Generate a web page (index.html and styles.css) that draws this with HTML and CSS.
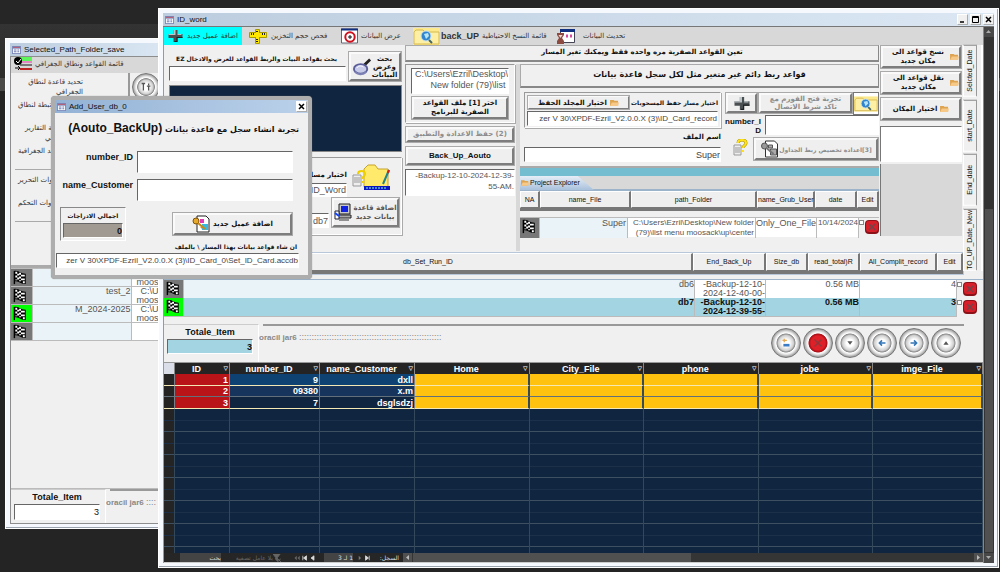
FILE: index.html
```html
<!DOCTYPE html>
<html lang="ar">
<head>
<meta charset="utf-8">
<title>ID_word</title>
<link rel="stylesheet" href="styles.css">
</head>
<body>
<svg class="defs" aria-hidden="true">
  <symbol id="i-form" viewBox="0 0 10 9"><path d="M0 0h10v9H0z" fill="#7a86b8"/><path d="M1 1h8v1H1z" fill="#c05a6a"/><path d="M1 3h8v5H1z" fill="#fff"/><path d="M2 4h3v1H2zM2 6h3v1H2zM6 4h2v1H6zM6 6h2v1H6z" fill="#6a78b0"/></symbol>
  <symbol id="i-plus" viewBox="0 0 16 14"><path d="M6 1h4v4h5v4h-5v4H6V9H1V5h5z" fill="#4a4f52"/><path d="M6 1h2v5H1V5h5zM10 5h4v1h-4z" fill="#bcc4c8"/><path d="M10 9v4H7v-1h2V8h6v1z" fill="#1d2022"/></symbol>
  <symbol id="i-ruler" viewBox="0 0 20 17"><path d="M1.500 4.500h17v5h-17z" fill="#ffe700" stroke="#a89b00"/><path d="M7.500 1.500h4v14h-4z" fill="#ffe700" stroke="#a89b00"/><path d="M2 5h16v4H2z" fill="#ffe700"/><path d="M3.500 5v2M5.500 5v2M14.500 5v2M16.500 5v2M8 11.500h2M8 13.500h2M8 3.500h2" stroke="#222"/></symbol>
  <symbol id="i-target" viewBox="0 0 17 15"><path d="M.5.5h16v14H.5z" fill="#fff" stroke="#667"/><path d="M0 0h17v2H0z" fill="#123080"/><circle cx="9" cy="8.500" r="4.700" fill="#fff" stroke="#d0101c" stroke-width="2"/><path d="M7 8.500h4M9 6.500v4" stroke="#111"/></symbol>
  <symbol id="i-globe" viewBox="0 0 27 17"><path d="M0 0h27v17H0z" fill="#fbe98c"/><path d="M1 16V4l2-2h7l2 2h14v12z" fill="#fdf0a4" stroke="#d6b851"/><circle cx="13" cy="8" r="5" fill="#2f86cf" stroke="#c9e2f5"/><path d="M11 6l4-1 1 3-3 3z" fill="#b8e4f4"/><path d="M16 12l3 3" stroke="#466" stroke-width="2"/></symbol>
  <symbol id="i-clock" viewBox="0 0 18 15"><path d="M3.500 1.500h14v12h-14z" fill="#fff" stroke="#445"/><path d="M3 0h15v3H3z" fill="#123080"/><path d="M9 7h2M13 7h2" stroke="#d8489c" stroke-width="3"/><path d="M0 4h7v2L5 9l2 3v3H0v-3l2-3-2-3z" fill="#8d4a40"/><path d="M1.500 6h4L3.500 9z" fill="#f0d6cc"/></symbol>
  <symbol id="i-flag" viewBox="0 0 20 18"><path d="M3 2v14" stroke="#000" stroke-width="1.500"/><path d="M3 2c5-1 6 3 12 3v11c-6 0-7-4-12-3z" fill="#000"/><path d="M4 3h2v2H4zM8 4h2v2H8zM12 6h2v2h-2zM6 5h2v2H6zM10 6h2v2h-2zM4 7h2v2H4zM8 8h2v2H8zM12 10h2v2h-2zM6 9h2v2H6zM10 10h2v2h-2zM4 11h2v1H4zM8 12h2v1H8zM12 13h2v2h-2z" fill="#fff"/></symbol>
  <symbol id="i-ask" viewBox="0 0 14 17"><path d="M1 6h7v10H1z" fill="#eee" stroke="#999"/><path d="M2 9h5M2 11h5M2 13h5" stroke="#999"/><path d="M5 4c0-4 8-4 8 0 0 3-3 2-3 5" fill="none" stroke="#ad9500" stroke-width="3"/><path d="M5 4c0-4 8-4 8 0 0 3-3 2-3 5M10 11v2" fill="none" stroke="#ffe21a" stroke-width="2"/></symbol>
  <symbol id="i-lens" viewBox="0 0 20 20"><path d="M12 8l6-6" stroke="#222" stroke-width="3"/><ellipse cx="8" cy="12" rx="7" ry="5" fill="#c9cce8" stroke="#5a5f9a" stroke-width="2"/><path d="M4 11c2-3 6-2 7-1" stroke="#fff" fill="none"/><path d="M2 15c3 4 9 3 12 0" stroke="#7d82b5" fill="none" stroke-width="2"/></symbol>
  <symbol id="i-pc" viewBox="0 0 18 19"><path d="M5 1h11v10H5z" fill="#c8c8c8" stroke="#222"/><path d="M7 3h7v6H7z" fill="#1022e0"/><path d="M4 12h13v3H4z" fill="#aaa" stroke="#222"/><path d="M1 8h4v8H1z" fill="#fff" stroke="#223"/><path d="M1 10l4 3" stroke="#14f" stroke-width="2"/><path d="M5 17h10" stroke="#333"/></symbol>
  <symbol id="i-edit" viewBox="0 0 38 28"><path d="M12 24V6l4-4h7l3 4h10v18z" fill="#ffea6c" stroke="#c8a32b"/><path d="M12 23h26v4H12z" fill="#0a17c0"/><path d="M14 25h20" stroke="#8fd" stroke-dasharray="2 1"/><path d="M37 7l-6 14" stroke="#21858a" stroke-width="2"/><path d="M37 7l-1 3" stroke="#c22" stroke-width="2"/><path d="M1 12h8v11H1z" fill="#eee" stroke="#999"/><path d="M2 15h6M2 17h6M2 19h6" stroke="#999"/><path d="M6 11c0-4 7-4 7 0 0 3-3 2-3 5M10 18v2" fill="none" stroke="#f0cf00" stroke-width="2"/></symbol>
  <symbol id="i-key" viewBox="0 0 18 18"><path d="M5 1h9l3 3v13H5z" fill="#fff" stroke="#222"/><path d="M8 4h4v4H8z" fill="#e23bb4"/><path d="M10 9h6v6h-6z" fill="#37b9df"/><circle cx="4" cy="6" r="3" fill="#e6a92c" stroke="#7e5200"/><path d="M6 8l7 6M9 13l2-2" stroke="#c98a1a" stroke-width="2"/></symbol>
  <symbol id="i-keyg" viewBox="0 0 18 18"><path d="M5 1h9l3 3v13H5z" fill="#fff" stroke="#333"/><path d="M8 5h4v3H8zM10 9h6v6h-6z" fill="#aaa" stroke="#555"/><circle cx="4" cy="6" r="3" fill="#999" stroke="#555"/><path d="M6 8l7 6" stroke="#777" stroke-width="2"/></symbol>
  <symbol id="i-dir" viewBox="0 0 10 9"><path d="M0 8V1h4l1 1h4v6z" fill="#dfa450"/><path d="M0 8l2-4h8L9 8z" fill="#f6c988"/></symbol>
  <symbol id="i-list" viewBox="0 0 18 14"><path d="M6 1h12M6 3h12" stroke="#3f3" stroke-width="1.500"/><path d="M6 5h12" stroke="#e3a"/><path d="M6 8h12" stroke="#777" stroke-width="2"/><path d="M6 12h12" stroke="#b22" stroke-width="2"/><circle cx="4" cy="4" r="4"/><path d="M2 4l2 2 3-4" stroke="#fff" fill="none"/><path d="M1 11h5M4 9l2 2-2 2" stroke="#000" fill="none"/></symbol>
  <symbol id="i-del" viewBox="0 0 14 14"><rect width="14" height="14" rx="4" fill="#8a1218"/><rect x="1" y="1" width="12" height="11" rx="3" fill="#d81e28"/><path d="M4 4l6 6M10 4l-6 6" stroke="#70454a" stroke-width="1.500"/></symbol>
</svg>
<main class="desktop">

<section class="win back">
  <header class="title"><svg class="fi"><use href="#i-form"/></svg>Selected_Path_Folder_save</header>
  <div class="inner">
    <div class="bar small"><svg class="lst"><use href="#i-list"/></svg><span dir="rtl">قائمة القواعد ونطاق الجغرافي</span></div>
    <div class="side">
      <div class="links">
        <p class="two">تحديد قاعدة لنطاق<br>الجغرافي</p>
        <p class="a">القواعد المرتبطة لنطاق</p>
        <p class="b">قائمة التقارير<br><span>الجغرافي</span></p>
        <p class="a">القواعد الجغرافية</p>
        <hr>
        <p class="a">ادوات التحرير</p>
        <p class="a">ادوات التحكم</p>
        <hr>
      </div>
      <button class="round" aria-label="tools"><svg viewBox="0 0 16 16"><path d="M5 4v8M11 7v5M3 4h4M11 4v2M9 7h4" stroke="#555" stroke-width="1.500"/></svg></button>
    </div>
    <table class="paths">
      <tr><td class="fl"><svg><use href="#i-flag"/></svg><td><div>new_test</div><td><div>C:\U<br>moos</div></tr>
      <tr><td class="fl"><svg><use href="#i-flag"/></svg><td><div>test_2</div><td><div>C:\U<br>moos</div></tr>
      <tr><td class="fl on"><svg><use href="#i-flag"/></svg><td><div>M_2024-2025</div><td><div>C:\U<br>moos</div></tr>
      <tr><td class="fl"><svg><use href="#i-flag"/></svg><td><div></div><td><div></div></tr>
    </table>
    <div class="foot">
      <div class="total"><label for="t1">Totale_Item</label><input id="t1" value="3"></div>
      <div class="status"><i></i>oracil jar6 <span>::::</span></div>
    </div>
  </div>
</section>

<section class="win front">
  <header class="title"><svg class="fi"><use href="#i-form"/></svg><span>ID_word</span>
    <div class="wb"><button aria-label="minimize"><svg viewBox="0 0 9 9"><path d="M2 7h4" stroke="#000" stroke-width="1.500"/></svg></button><button aria-label="maximize"><svg viewBox="0 0 9 9"><path d="M1.500 1.500h6v6h-6zM1 2.500h7" stroke="#000" fill="none"/></svg></button><button aria-label="close"><svg viewBox="0 0 9 9"><path d="M2 2l5 5M7 2L2 7" stroke="#000" stroke-width="1.500"/></svg></button></div>
  </header>
  <div class="frame">
  <div class="body">
    <nav class="bar">
      <a href="#" class="n1"><svg><use href="#i-plus"/></svg><span dir="rtl">اضافة عميل جديد</span></a>
      <a href="#" class="n2"><svg><use href="#i-ruler"/></svg><span dir="rtl">فحص حجم التخزين</span></a>
      <a href="#" class="n3"><svg><use href="#i-target"/></svg><span dir="rtl">عرض البيانات</span></a>
      <a href="#" class="n4"><svg><use href="#i-globe"/></svg><b>back_UP</b><span dir="rtl">قائمة النسخ الاحتياطية</span></a>
      <a href="#" class="n5"><svg><use href="#i-clock"/></svg><span dir="rtl">تحديث البيانات</span></a>
    </nav>
    <div class="top">
      <div class="find">
        <div class="findrow">
          <div class="findbox"><label for="q" dir="rtl">بحث بقواعد البيات والربط القواعد للعرض والادخال EZ</label><input id="q"></div>
          <button class="bv look"><svg><use href="#i-lens"/></svg><span dir="rtl">بحث<br>وعرض<br>البيانات</span></button>
        </div>
        <div class="navy"></div>
        <div class="group pick">
          <div class="line"><div class="fld"><label for="p1" dir="rtl">اختيار مسار</label><input id="p1" value="ID_Word"></div><svg class="ed"><use href="#i-edit"/></svg></div>
          <div class="line"><input class="db" aria-label="database" value="db7"><button class="bv add"><svg><use href="#i-pc"/></svg><span dir="rtl">اضافة قاعدة بيانات جديد</span></button></div>
        </div>
      </div>
      <h2 class="strip one" dir="rtl">تعين القواعد الصفرية مره واحده فقط ويمكنك تغير المسار</h2>
      <div class="backup">
        <div class="group g1"><textarea aria-label="folder">C:\Users\Ezril\Desktop\
New folder (79)\list </textarea><button class="bv" dir="rtl">اختر [1] ملف القواعد الصفرية للبرنامج</button></div>
        <button class="bv dim" dir="rtl">(2) حفظ الاعدادة والتطبيق</button>
        <button class="bv auto">Back_Up_Aouto</button>
        <textarea class="bk" aria-label="backup name">-Backup-12-10-2024-12-39-
55-AM.</textarea>
      </div>
      <div class="link">
        <h2 class="strip two" dir="rtl">قواعد ربط دائم غير متغير مثل لكل سجل قاعدة بيانات</h2>
        <div class="panel">
          <div class="pl">
            <div class="group sv"><div class="line"><button class="bv sel"><span dir="rtl">اختيار المجلد الحفظ</span><svg><use href="#i-dir"/></svg></button><label for="p2" dir="rtl">اختيار مسار حفظ المسحوبات</label></div><input id="p2" class="long" value="zer V 30\XPDF-Ezril_V2.0.0.X (3)\ID_Card_record"></div>
            <label for="fn" class="fn" dir="rtl">اسم الملف</label><input id="fn" value="Super">
          </div>
          <div class="pr">
            <div class="line"><button class="bv pb" aria-label="add"><svg><use href="#i-plus"/></svg></button><button class="bv dim tst" dir="rtl">تجربة فتح الفورم مع تاكد شرط الاتصال</button><button class="gl" aria-label="search"><svg><use href="#i-globe"/></svg></button></div>
            <div class="line num"><label for="ni">number_I<br>D</label><input id="ni"></div>
            <div class="line"><svg class="ask"><use href="#i-ask"/></svg><button class="bv dim cst"><svg><use href="#i-keyg"/></svg><span dir="rtl">[3]اعدادة تخصيص ربط الجداول</span></button></div>
          </div>
        </div>
        <div class="blue"></div>
        <div class="ptab"><span><svg><use href="#i-dir"/></svg>Project Explorer</span></div>
        <div class="hd h1"><button>NA</button><button>name_File</button><button>path_Folder</button><button>name_Grub_User</button><button>date</button><button>Edit</button></div>
        <div class="prow"><span class="fl"><svg><use href="#i-flag"/></svg></span><span class="pale">Super</span><span class="long">C:\Users\Ezril\Desktop\New folder<br>(79)\list menu moosack\up\center</span><span>Only_One_File</span><span class="dt">10/14/2024</span><span class="ck"><input type="checkbox" aria-label="select"><button class="del" aria-label="delete"><svg><use href="#i-del"/></svg></button></span></div>
      </div>
      <div class="move">
        <button class="bv"><span dir="rtl">نسخ قواعد الى<br>مكان جديد</span><svg><use href="#i-dir"/></svg></button>
        <button class="bv"><span dir="rtl">نقل قواعد الى<br>مكان جديد</span><svg><use href="#i-dir"/></svg></button>
        <button class="bv here"><span dir="rtl">اختيار المكان</span><svg><use href="#i-dir"/></svg></button>
        <div class="wh"></div><div class="gr"></div>
      </div>
      <div class="tabs"><button>Selcted_Date</button><button>start_Date</button><button>End_date</button><button>TO_UP_Date_New</button></div>
    </div>
    <div class="hd h2"><button>db_Set_Run_ID</button><button>End_Back_Up</button><button>Size_db</button><button>read_total)R</button><button>All_Complit_record</button><button>Edit</button></div>
    <div class="rows">
      <div class="r"><span class="fl"><svg><use href="#i-flag"/></svg></span><span class="pale">db6</span><span>-Backup-12-10-<br>2024-12-40-00-</span><span>0.56 MB</span><span>4</span><span class="ck"><input type="checkbox" aria-label="select db6"><button class="del" aria-label="delete"><svg><use href="#i-del"/></svg></button></span></div>
      <div class="r cur"><span class="fl on"><svg><use href="#i-flag"/></svg></span><span>db7</span><span>-Backup-12-10-<br>2024-12-39-55-</span><span>0.56 MB</span><span>3</span><span class="ck"><input type="checkbox" aria-label="select db7"><button class="del" aria-label="delete"><svg><use href="#i-del"/></svg></button></span></div>
    </div>
    <div class="foot">
      <div class="total"><label for="t2">Totale_Item</label><input id="t2" value="3"></div>
      <div class="status"><i></i>oracil jar6 <span>:::::::::::::::::::::::::::::::::::::::::::::::::::::::::</span>
        <div class="rounds">
          <button class="round" aria-label="new"><svg viewBox="0 0 16 16"><path d="M5 9h7v3H5z" fill="#3b7cc4"/><path d="M4 5h5M6 3v4" stroke="#e8a850" stroke-width="1.500"/></svg></button>
          <button class="round red" aria-label="delete"><svg viewBox="0 0 16 16"><path d="M4 4l8 8M12 4l-8 8" stroke="#8a3a3a" stroke-width="1.500"/></svg></button>
          <button class="round" aria-label="last"><svg viewBox="0 0 16 16"><path d="M5 6h6l-3 4z" fill="#555"/></svg></button>
          <button class="round" aria-label="previous"><svg viewBox="0 0 16 16"><path d="M12 8H5M8 5L5 8l3 3" stroke="#3477b8" stroke-width="1.800" fill="none"/></svg></button>
          <button class="round" aria-label="next"><svg viewBox="0 0 16 16"><path d="M4 8h7M8 5l3 3-3 3" stroke="#3477b8" stroke-width="1.800" fill="none"/></svg></button>
          <button class="round" aria-label="first"><svg viewBox="0 0 16 16"><path d="M5 10h6L8 6z" fill="#555"/></svg></button>
        </div>
      </div>
    </div>
    <div class="sheet">
      <table class="grid">
        <colgroup><col class="c0"><col class="c1"><col class="c2"><col class="c3"><col><col><col><col><col class="c8"></colgroup>
        <thead><tr><th class="cn"></th><th>ID</th><th>number_ID</th><th>name_Customer</th><th>Home</th><th>City_File</th><th>phone</th><th>jobe</th><th>imge_File</th></tr></thead>
        <tbody>
        <tr class="s1"><td><td>1<td>9<td>dxll<td><td><td><td><td></tr>
        <tr class="s2"><td><td>2<td>09380<td>x.m<td><td><td><td><td></tr>
        <tr class="s3"><td><td>3<td>7<td>dsglsdzj<td><td><td><td><td></tr>
        <tr class="rest"><td><td><td><td><td><td><td><td><td></tr>
        </tbody>
      </table>
    </div>
    <div class="recnav"><span class="srch">بحث</span><span class="nof" dir="rtl">بلا عامل تصفية</span><svg class="fun" viewBox="0 0 9 9"><path d="M0 0h8L5 4v4L3 6V4zM5 5l4 4M9 5L5 9" fill="#666" stroke="#666"/></svg><svg class="ar" viewBox="0 0 30 8"><path d="M4 1v6L1 4zM8 1v6L5 4z" fill="#666"/><path d="M12 1v6M17 1v6l-4-3zM27 1v6l-4-3z" fill="#ddd" stroke="#ddd"/></svg><span class="pos" dir="rtl">1 لـ 3</span><svg class="ar2" viewBox="0 0 16 8"><path d="M1 1v6l3-3z" fill="#777"/><path d="M10 1v6l4-3zM15 1v6" fill="#ddd" stroke="#ddd"/></svg><span class="rec" dir="rtl">السجل:</span><div class="hs"><i><svg viewBox="0 0 9 9"><path d="M6 2v5L3 4.500z" fill="#bbb"/></svg></i><b></b><i><svg viewBox="0 0 9 9"><path d="M3 2v5l3-2.500z" fill="#bbb"/></svg></i></div></div>
  </div>
  <div class="vs"><i><svg viewBox="0 0 9 9"><path d="M2 6h5L4.500 3z" fill="#aaa"/></svg></i><b></b><i><svg viewBox="0 0 9 9"><path d="M2 3h5L4.500 6z" fill="#aaa"/></svg></i></div>
  </div>
</section>

<section class="dlg">
  <header class="title"><svg class="fi"><use href="#i-form"/></svg><span>Add_User_db_0</span><button class="x" aria-label="close"><svg viewBox="0 0 9 9"><path d="M2 2l5 5M7 2L2 7" stroke="#000" stroke-width="1.500"/></svg></button></header>
  <div class="dbody">
    <h1 dir="rtl">تجربة انشاء سجل مع قاعدة بيانات <bdi>(Aouto_BackUp)</bdi></h1>
    <div class="row"><label for="d1">number_ID</label><input id="d1"></div>
    <div class="row"><label for="d2">name_Customer</label><input id="d2"></div>
    <div class="act">
      <div class="sum"><label for="d3" dir="rtl">اجمالي الادراجات</label><input id="d3" value="0"></div>
      <button class="bv"><svg><use href="#i-key"/></svg><span dir="rtl">اضافة عميل جديد</span></button>
    </div>
    <label class="pth" for="d4" dir="rtl">ان شاء قواعد بيانات بهذا المسار \ بالملف</label>
    <input id="d4" class="pin long" value="zer V 30\XPDF-Ezril_V2.0.0.X (3)\ID_Card_0\Set_ID_Card.accdb">
  </div>
</section>
</main>
</body>
</html>
```
FILE: styles.css
```css
* { box-sizing: border-box; }
body { margin: 0; font: 9px/11px "Liberation Sans", "DejaVu Sans", sans-serif; color: #111; }
h1, h2, p, hr { margin: 0; }
button, input, textarea { font: inherit; color: inherit; padding: 0; margin: 0; border-radius: 0; min-width: 0; }
textarea { resize: none; overflow: hidden; display: block; }
svg { display: block; flex: none; }
a { color: inherit; text-decoration: none; }
.defs { position: absolute; width: 0; height: 0; }
.desktop { position: relative; height: 100vh; min-height: 572px; overflow: hidden; background: linear-gradient(#262626 24px, #333 24px, #2c2c2c 78px, #4a4a4a 78px, #4a4a4a 91px, #242424 91px); }
.win { position: absolute; background: #f5f8fc; border: 1px solid #fff; box-shadow: inset -1px -1px #9aa3ad; padding: 4px; display: flex; flex-direction: column; }
.back { left: 5px; top: 38px; width: 166px; height: 491px; }
.front { left: 158px; right: 1px; top: 8px; bottom: 4px; }
.title { display: flex; align-items: center; gap: 3px; flex: none; height: 13px; padding-left: 2px; font: 8px/12px "Liberation Sans", sans-serif; color: #111; background: linear-gradient(90deg, #bccddf, #dbe7f3); white-space: nowrap; }
.fi { width: 9px; height: 8px; }
.wb { display: flex; gap: 2px; margin-left: auto; }
.wb button, .x { width: 11px; height: 11px; border: 1px outset #fff; background: #f0f0f0; }
.wb svg, .x svg { width: 9px; height: 9px; }

input, textarea { background: #fff; border: 1px solid; border-color: #666 #fff #fff #666; text-align: right; }
.group { border: 1px solid; border-color: #999 #fff #fff #999; box-shadow: 1px 1px #aaa; }
.line { display: flex; }
.bv { display: flex; align-items: center; justify-content: center; gap: 3px; border: 3px solid; border-color: #fafafa #7d7d7d #7d7d7d #fafafa; outline: 1px solid #aaa; outline-offset: -1px; background: #efefef; font: bold 7px/9px "DejaVu Sans", sans-serif; text-align: center; }
.dim { color: #8c8c8c; }
.bar { display: flex; height: 18px; background: #d8d8d8; font: 7px/18px "DejaVu Sans", sans-serif; color: #333; white-space: nowrap; }
.bar a { display: flex; align-items: center; gap: 3px; }

.inner { flex: 1; border: 1px solid #8d8d8d; background: #f0f0f0; display: flex; flex-direction: column; overflow: hidden; }
.small { height: 16px; line-height: 15px; font-size: 7px; padding-left: 3px; gap: 3px; }
.lst { width: 18px; height: 14px; }
.side { display: flex; height: 195px; border-bottom: 3px solid #aaa; }
.links { width: 119px; border-right: 2px solid #999; font: 7px/10px "DejaVu Sans", sans-serif; color: #333; white-space: nowrap; padding-top: 4px; }
.links .two { margin-bottom: 3px; width: 72px; text-align: right; }
.links .a { padding-left: 7px; margin-bottom: 13px; }
.links .b { padding-left: 14px; margin-bottom: 3px; }
.links .b span { padding-left: 20px; }
.links hr { border: 0; border-top: 1px solid #aaa; margin: 0 4px 5px; }
.round { width: 30px; height: 30px; flex: none; border: 1px solid #777; border-radius: 50%; background: radial-gradient(circle at 50% 50%, #fff 18%, #d0d0d0 38%, #888 46%, #fff 50%, #e4e4e4 58%, #aaa 68%); display: grid; place-items: center; }
.side .round { width: 28px; height: 28px; margin-left: 2px; }
.round svg { width: 14px; height: 14px; }
.red { background: radial-gradient(circle, #e02028 35%, #a80e16 46%, #fff 50%, #e4e4e4 58%, #aaa 68%); }
.paths { border-collapse: collapse; table-layout: fixed; width: 156px; color: #555; line-height: 10px; }
.paths td { padding: 0; border: 1px solid #bbb; border-left: 0; background: #eaf4f8; text-align: right; }
.paths td:nth-child(1) { width: 21px; }
.paths td:nth-child(2) { width: 99px; }
.paths td:nth-child(3) { background: #fff; }
.paths div { height: 17px; line-height: 9px; }
.paths td:nth-child(3) div { width: 27px; }
.fl svg { width: 20px; height: 17px; }
.paths .fl, .fl { background: #777; }
.paths .on, .fl.on { background: #0f0; }
.foot { display: flex; }
.back .foot { margin-top: auto; border-top: 1px solid #bbb; height: 35px; }
.total { width: 95px; flex: none; border-right: 1px solid #fff; border-top: 1px solid #ccc; padding: 1px 5px 0 3px; text-align: center; }
.total label { display: block; font: bold 9px/13px "Liberation Sans", sans-serif; }
.total input { width: 100%; height: 16px; display: block; font-weight: bold; font-size: 9px; }
.back .total input { font-weight: normal; }
.status { position: relative; flex: 1; color: #888; font: bold 8px/12px "Liberation Sans", sans-serif; white-space: nowrap; overflow: hidden; }
.status i { display: block; border-top: 2px solid #999; margin: 0 0 5px 4px; }
.status span { font: 9px/12px "Liberation Sans", sans-serif; }

.frame { flex: 1; display: flex; min-height: 0; border-top: 1px solid #777; }
.body { flex: 1; min-width: 0; display: flex; flex-direction: column; background: #f0f0f0; border-left: 1px solid #999; }
.n1 { width: 78px; background: #0ff; padding-left: 3px; }
.n1 svg { width: 17px; height: 14px; }
.n2 { width: 99px; padding-left: 6px; }
.n2 svg { width: 20px; height: 17px; }
.n3 { width: 72px; }
.n3 svg { width: 17px; height: 16px; }
.n4 { width: 144px; }
.n4 svg { width: 27px; height: 17px; }
.bar .n4 { gap: 1px; }
.n4 b { font: bold 9px/18px "Liberation Sans", sans-serif; margin-right: 2px; }
.n5 svg { width: 18px; height: 15px; margin-right: 5px; }
.top { display: grid; grid-template-columns: 240px 110px 1fr 82px 20px; grid-template-rows: 19px 187px; column-gap: 1px; height: 206px; }
.find { grid-row: 1 / 3; min-width: 0; padding: 6px 2px 0 5px; }
.findrow { display: flex; gap: 2px; }
.findbox { flex: 1; min-width: 0; display: flex; flex-direction: column; }
.findbox label { font: bold 6px/15px "DejaVu Sans", sans-serif; white-space: nowrap; padding-right: 9px; }
.findbox input { height: 15px; }
.look { width: 54px; height: 31px; flex: none; gap: 0; line-height: 8px; }
.look svg { width: 19px; height: 20px; }
.navy { height: 67px; margin-top: 3px; background: #10253f; border: 1px solid #888; }
.pick { margin-top: 5px; height: 78px; padding: 1px; }
.pick .line { justify-content: flex-end; align-items: flex-end; color: #555; }
.fld { width: 120px; margin-right: 5px; }
.fld label { display: block; font: bold 7px/16px "DejaVu Sans", sans-serif; color: #111; }
.fld input { width: 100%; height: 14px; }
.ed { width: 38px; height: 30px; margin: 3px 10px 5px 0; }
.db { width: 80px; height: 15px; margin-right: 2px; }
.add { width: 69px; height: 31px; gap: 1px; }
.add svg { width: 18px; height: 19px; }
.strip { border: 1px solid; border-color: #aaa #888 #888 #aaa; border-bottom-width: 2px; text-align: center; font: bold 7px/13px "DejaVu Sans", sans-serif; white-space: nowrap; }
.one { grid-column: 2 / 4; height: 17px; }
.backup { display: flex; flex-direction: column; gap: 3px; color: #555; background: #f0f0f0; }
.backup textarea { width: 100%; height: 26px; white-space: pre; }
.g1 { padding: 3px 5px; height: 59px; }
.g1 .bv { width: 100%; height: 24px; margin-top: 2px; color: #111; }
.backup > .bv { height: 17px; flex: none; }
.backup > .auto { height: 20px; color: #111; font: bold 8px/12px "Liberation Sans", sans-serif; }
.backup .bk { height: 27px; font-size: 8px; }
.long { font-size: 8px; }
.link { min-width: 0; border-left: 4px solid #d8d8d8; display: flex; flex-direction: column; }
.two.strip { height: 24px; font-size: 8px; line-height: 20px; }
.panel { display: flex; height: 80px; border-bottom: 2px solid #aaa; padding: 4px 0 0 4px; }
.pl { flex: 1; min-width: 0; }
.sv { padding: 1px 2px; height: 36px; }
.sv .line { justify-content: space-between; align-items: center; height: 17px; }
.sel { width: 103px; height: 15px; border-width: 2px; line-height: 8px; }
.sel svg, .move svg { width: 9px; height: 8px; }
.pl label { font: bold 6px/13px "DejaVu Sans", sans-serif; white-space: nowrap; }
.pl input { width: 100%; height: 15px; color: #444; }
.pl .fn { display: block; margin: 3px 0; font-size: 7px; }
.pr { width: 158px; padding-left: 4px; }
.pb { width: 33px; height: 22px; }
.pb svg { width: 18px; height: 15px; }
.tst { width: 95px; height: 22px; line-height: 8px; padding: 0 1px; }
.gl { flex: 1; border: 1px solid #777; background: #fff; height: 23px; }
.gl svg { width: 100%; height: 20px; }
.num { font: bold 8px/9px "Liberation Sans", sans-serif; text-align: right; gap: 4px; height: 22px; }
.num label { width: 36px; padding-top: 2px; }
.num input { flex: 1; height: 20px; }
.ask { width: 18px; height: 17px; margin: 2px 4px 0 6px; }
.cst { flex: 1; height: 24px; gap: 0; font-size: 6px; white-space: nowrap; }
.cst svg { width: 19px; height: 18px; }
.blue { height: 8px; flex: none; background: #74bcd0; }
.ptab { height: 15px; flex: none; background: #d8d8d8; border-bottom: 2px solid #9db3ca; }
.ptab span { display: flex; gap: 1px; align-items: center; width: 74px; height: 14px; padding-left: 1px; white-space: nowrap; font: 7px/14px "Liberation Sans", sans-serif; background: linear-gradient(#e6eef7, #a9c1dc); clip-path: polygon(0 0, 78% 0, 100% 100%, 0 100%); }
.ptab svg { width: 8px; height: 8px; }
.hd { display: grid; align-items: stretch; border-bottom: 3px solid #777; background: #eee; }
.hd button { border: 1px solid; border-color: #fff #777 #777 #fff; border-right-width: 2px; background: #efefef; font: 7px/12px "Liberation Sans", sans-serif; white-space: nowrap; }
.h1 { grid-template-columns: 20px 91px 1fr 58px 42px 22px; height: 20px; }
.prow { display: grid; grid-template-columns: 20px 88px 1fr 61px 42px 20px; height: 20px; margin-top: 6px; background: #fff; border-top: 1px solid #bbb; color: #555; line-height: 10px; text-align: right; }
.prow > span { border-right: 1px solid #bbb; padding-right: 1px; min-width: 0; white-space: nowrap; }
.pale { background: #eaf4f8; }
.prow .dt { font-size: 8px; padding: 0; }
.prow .ck, .r .ck { display: flex; gap: 1px; border: 0; background: #f0f0f0; padding: 0; }
.ck input { appearance: none; width: 5px; height: 5px; flex: none; border: 1px solid #888; margin-top: 2px; }
.del { border: 0; background: none; width: 14px; height: 17px; }
.del svg { width: 14px; height: 14px; }
.move { grid-column: 4; grid-row: 1 / 3; display: flex; flex-direction: column; gap: 2px; }
.move .bv { height: 24px; gap: 6px; font-size: 7px; justify-content: flex-end; white-space: nowrap; }
.move .here { justify-content: center; gap: 3px; }
.wh { margin-top: 3px; height: 36px; border: 1px solid; border-color: #777 #fff #fff #777; background: #fff; }
.gr { flex: 1; background: #d8d8d8; margin-bottom: 15px; border-left: 1px solid #777; }
.tabs { grid-column: 5; grid-row: 1 / 3; height: 226px; display: flex; flex-direction: column; gap: 3px; padding-right: 4px; border-right: 2px solid #fff; }
.tabs button { flex: 1; writing-mode: vertical-rl; transform: rotate(180deg); font: 7px/10px "Liberation Sans", sans-serif; border: 1px solid; border-color: #fff #fff #888 #999; background: #f0f0f0; white-space: nowrap; }
.h2 { grid-template-columns: 1fr 73px 42px 52px 77px 26px; width: calc(100% - 20px); height: 21px; margin-top: 2px; outline: 1px solid #b8c8da; }
.rows { margin: 5px 0 0; border-top: 1px solid #9db3ca; }
.r { display: grid; grid-template-columns: 20px 1fr 71px 94px 97px 26px; height: 18px; color: #555; text-align: right; line-height: 9px; }
.r > span { background: #fff; border-right: 1px solid #bbb; border-bottom: 1px solid #bbb; }
.r > .pale { background: #eaf4f8; }
.r > .fl { background: #777; }
.r > .fl.on { background: #0f0; }
.cur { font-weight: bold; color: #111; }
.cur > span { background: #a3d4e2; }
.front .foot { height: 46px; padding-top: 8px; flex: none; }
.front .foot .total input { background: #a3d4e2; height: 15px; }
.front .status { margin-right: 19px; }
.rounds { position: absolute; right: 3px; top: 4px; display: flex; gap: 2px; }
.sheet { flex: 1; min-height: 0; overflow: hidden; background: #10253f; border-top: 1px solid #999; display: flex; }
.grid { border-collapse: separate; border-spacing: 0; table-layout: fixed; width: 100%; height: 100%; font: bold 9px/10px "Liberation Sans", sans-serif; color: #fff; background: #10253f; }
.c0 { width: 11px; } .c1 { width: 55px; } .c2 { width: 90px; } .c3 { width: 95px; } .c8 { width: 110px; }
.grid th { height: 11px; padding: 0 11px 0 0; background: #242424; border-right: 1px solid #888; position: relative; }
.grid th:not(.cn)::after { content: "▿"; position: absolute; right: 1px; top: 0; font: 9px/11px "DejaVu Sans", sans-serif; }
.grid .cn { background: #d9dee8; }
.grid td { padding: 0 1px 0 0; text-align: right; border-right: 1px solid #777f89; border-bottom: 1px solid #62707c; }
.s1 td { height: 12px; background: #0d4272; } .s2 td { height: 11px; background: #17345c; } .s3 td { height: 12px; }
.grid .s1 td, .grid .s3 td { border-bottom-color: #f4e9b4; }
.grid tr:not(.rest) td:nth-child(2) { background: #b91519; }
.grid tr:not(.rest) td:nth-child(n+5) { background: #ffc20e; border-right: 2px solid #354a5a; }
.rest td { background: repeating-linear-gradient(transparent 0 11px, #1c3049 11px 12px, transparent 12px 22px, #3d5062 22px 23px); border-right-color: #34485c; border-bottom: 0; }
.grid td:first-child { background-color: #242424; }
.recnav { flex: none; height: 10px; display: flex; align-items: center; background: #262626; color: #ddd; font: 6px/9px "DejaVu Sans", sans-serif; padding-left: 16px; white-space: nowrap; border-bottom: 1px solid #ccc; }
.srch { width: 41px; background: #444; text-align: right; }
.nof { width: 52px; color: #666; }
.fun { width: 8px; height: 8px; }
.ar { width: 30px; height: 6px; margin: 0 4px 0 9px; }
.pos { width: 29px; background: #444; }
.ar2 { width: 16px; height: 6px; margin: 0 3px; }
.rec { width: 24px; margin-right: 4px; }
.hs { flex: 1; display: flex; height: 9px; background: #353535; }
.hs b { width: 48%; background: #505050; margin-left: 1px; }
.hs i { width: 9px; background: #505050; }
.hs svg, .vs svg { width: 9px; height: 9px; }
.hs i:last-child { margin-left: auto; }
.vs { width: 11px; display: flex; flex-direction: column; background: #333; border-left: 1px solid #888; }
.vs i { height: 10px; background: #484848; }
.vs b { flex: 1; background: #505050; margin: 172px 1px 1px; }

.dlg { position: absolute; left: 51px; top: 96px; width: 261px; border: 4px solid #adadad; border-radius: 4px; background: #f0f0f0; box-shadow: 0 0 1px #777; }
.dlg .title { background: linear-gradient(90deg, #93b2d5, #bbd1ea); }
.x { margin-left: auto; margin-right: 1px; background: #fff; }
.dbody { padding: 6px 9px 7px 1px; }
h1 { font: bold 8px/18px "DejaVu Sans", sans-serif; white-space: nowrap; }
h1 bdi { font: bold 12px/18px "Liberation Sans", sans-serif; }
.row { display: flex; gap: 4px; padding: 0 6px 0 0; height: 22px; margin: 12px 0 0; font: bold 9px/13px "Liberation Sans", sans-serif; }
.row + .row { margin-top: 6px; }
.row label { width: 77px; text-align: right; }
.row input { flex: 1; }
.act { display: flex; justify-content: space-between; align-items: center; padding: 6px 6px 0 4px; }
.sum { width: 66px; border: 1px solid; border-color: #888 #fff #fff #888; padding: 0 2px 2px; }
.sum label { display: block; font: bold 6px/15px "DejaVu Sans", sans-serif; text-align: center; white-space: nowrap; }
.sum input { display: block; width: 100%; height: 15px; background: #a09a93; font-weight: bold; }
.act .bv { width: 121px; height: 24px; }
.act .bv svg { width: 18px; height: 18px; }
.pth { display: block; font: bold 6px/12px "DejaVu Sans", sans-serif; padding-right: 2px; white-space: nowrap; }
.pin { display: block; width: 100%; height: 15px; color: #444; }
```
